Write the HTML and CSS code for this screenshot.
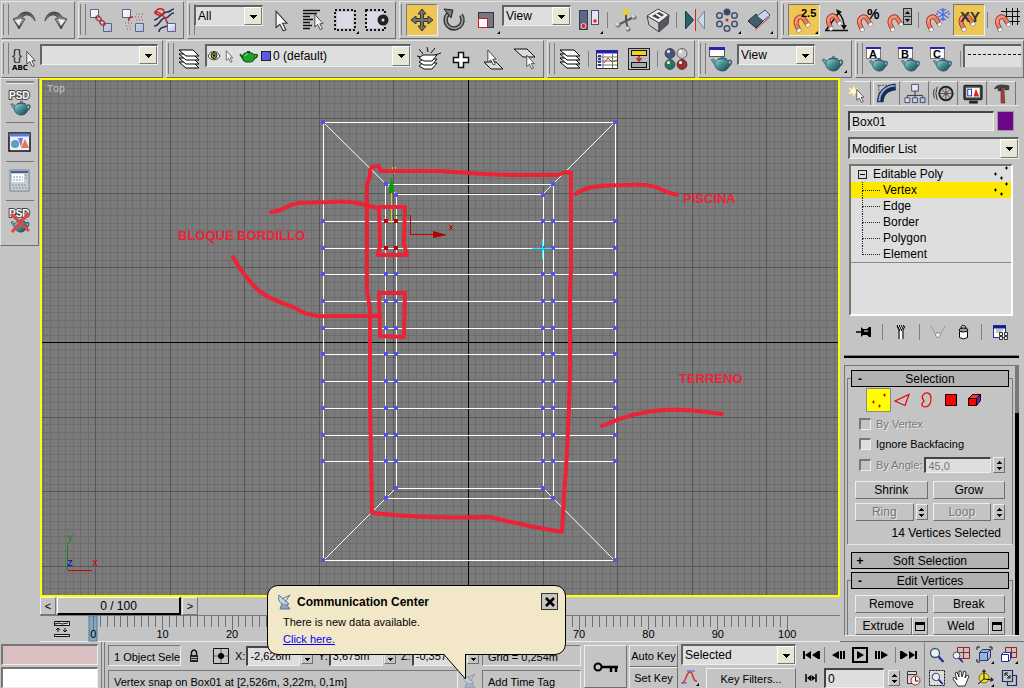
FILE: index.html
```html
<!DOCTYPE html>
<html lang="en">
<head>
<meta charset="utf-8">
<title>Box01 - Editable Poly</title>
<link rel="stylesheet" href="styles.css">
</head>
<body>
<svg class="defs" aria-hidden="true">
  <defs>
    <linearGradient id="g-steel" x1="0" y1="0" x2="0" y2="1"><stop offset="0" stop-color="#444"/><stop offset=".5" stop-color="#999"/><stop offset="1" stop-color="#333"/></linearGradient>
    <linearGradient id="g-pot" x1="0" y1="0" x2="1" y2="1"><stop offset="0" stop-color="#b4dcdc"/><stop offset=".4" stop-color="#4f979d"/><stop offset="1" stop-color="#173f48"/></linearGradient>
    <linearGradient id="g-box" x1="0" y1="0" x2="1" y2="1"><stop offset="0" stop-color="#fff"/><stop offset="1" stop-color="#b4bcd8"/></linearGradient>
    <radialGradient id="g-ball" cx=".35" cy=".3" r=".8"><stop offset="0" stop-color="#fff"/><stop offset="1" stop-color="#445"/></radialGradient>
    <symbol id="cursor" viewBox="0 0 12 20"><path d="M1 1v15l3.500-3 3 6 2.500-1-3-6H11z" fill="#f6f6f6" stroke="#333"/></symbol>
    <symbol id="teapot" viewBox="0 0 24 18"><path d="M18 7c3-3 5-1 4.500 1S20 12 17 13" fill="none" stroke="#2c6068" stroke-width="1.600"/><path d="M6 12L1 5l2-1 5 4z" fill="#62a5a9" stroke="#2a5960" stroke-width=".7"/><path d="M5 10c0-5 4-6 8-6s7 2 7 6c0 4-3 7-7 7s-8-3-8-7z" fill="url(#g-pot)" stroke="#224b53" stroke-width=".7"/><path d="M8 4.500c3-1.500 7-1.500 10 0" fill="none" stroke="#224b53"/><circle cx="13" cy="2.500" r="1.300" fill="#4f979d" stroke="#224b53" stroke-width=".6"/></symbol>
    <symbol id="magnet" viewBox="0 0 20 24"><g fill="none"><path d="M7 21L3.500 13C2 5 9 2 12.500 7L17 14" stroke="#84291c" stroke-width="5.500"/><path d="M7 21L3.500 13C2 5 9 2 12.500 7L17 14" stroke="#f07a5e" stroke-width="4"/><path d="M3 12C2 6 7 3 11 5" stroke="#ffc0ac"/><path d="M5.500 17.500L7.500 22M15.500 11.500L18 15.500" stroke="#888" stroke-width="5"/><path d="M6 18.500L7.300 21.500M16 12.500L17.600 15" stroke="#fff" stroke-width="4"/></g></symbol>
    <symbol id="layers" viewBox="0 0 24 20"><g fill="#fff" stroke="#000"><path d="M2 13h14l6 6H9z"/><path d="M2 9h14l6 6H9z"/><path d="M2 5h14l6 6H9z"/><path d="M2 1h14l6 6H9z"/></g></symbol>
    <symbol id="points" viewBox="0 0 16 16"><path d="M1 8h3M2.500 6.500v3M7 12h3M8.500 10.500v3M12 2h3M13.500 .5v3" stroke="currentColor"/></symbol>
    <symbol id="dish" viewBox="0 0 16 16"><path d="M2 1c-2 7 3 11 10 9z" fill="#c4d6ec" stroke="#577399"/><path d="M5 5l8-4M8 8l5-7" stroke="#577399"/><path d="M5 10l-2 5h10l-4-5" fill="#8da4c2" stroke="#577399"/></symbol>
    <symbol id="lens" viewBox="0 0 16 16"><circle cx="6" cy="6" r="4.500" fill="#e4f4f8" stroke="#44506e" stroke-width="1.300"/><path d="M9.500 9.500L14.500 15" stroke="#2830a0" stroke-width="2.400"/></symbol>
  </defs>
</svg>

<div class="app">
  <header class="toolbar" aria-label="Main toolbar">
    <div class="group">
      <button class="tool" aria-label="Undo"><svg viewBox="0 0 28 28"><path d="M25 15C24 5 12 3 8 11L3 13l6 10 6-10-3-1c3-5 9-4 13 3z" fill="url(#g-steel)" stroke="#333" stroke-width=".7"/><path d="M5 14l7-1-3 7z" fill="#eee"/></svg></button>
      <button class="tool" aria-label="Redo"><svg viewBox="0 0 28 28"><path d="M3 15C4 5 16 3 20 11l5 2-6 10-6-10 3-1c-3-5-9-4-13 3z" fill="url(#g-steel)" stroke="#333" stroke-width=".7"/><path d="M23 14l-7-1 3 7z" fill="#eee"/></svg></button>
    </div>
    <div class="group">
      <button class="tool" aria-label="Select and link"><svg viewBox="0 0 28 28"><g fill="url(#g-box)" stroke="#5b628c"><path d="M3.500 3.500h8v8h-8zM16.500 17.500h8v8h-8z"/></g><g fill="none" stroke="#a22a2a" stroke-width="1.300"><ellipse cx="11.500" cy="12.500" rx="3" ry="2" transform="rotate(45 11.500 12.500)"/><ellipse cx="15.500" cy="17" rx="3" ry="2" transform="rotate(45 15.500 17)"/></g></svg></button>
      <button class="tool" aria-label="Unlink selection"><svg viewBox="0 0 28 28"><g fill="url(#g-box)" stroke="#5b628c"><path d="M3.500 3.500h8v8h-8zM16.500 17.500h8v8h-8z"/></g><path d="M10 15c-1-3 1-4 4-4" fill="none" stroke="#a22a2a" stroke-width="1.500"/><path d="M17 8h7M16 11h9M17 14h7M6 17h8M7 20h6M8 23h4" stroke="#c04848" stroke-dasharray="1 2"/></svg></button>
      <button class="tool" aria-label="Bind to space warp"><svg viewBox="0 0 28 28"><path d="M3 14c4 0 9-8 13-8s4-3 7-3M3 20c6 0 6-8 11-8s4-5 9-5M8 26c0-8 12-2 8-10" fill="none" stroke="#283058" stroke-width="1.500"/><path d="M4 7c2-6 9-5 9-1s-7 4-9 1 8-1 12 9" fill="none" stroke="#c42222" stroke-width="1.500"/><path d="M16.500 17.500h8v8h-8z" fill="url(#g-box)" stroke="#5b628c"/></svg></button>
    </div>
    <div class="group">
      <span class="combo w-filter"><select aria-label="Selection filter"><option>All</option></select></span>
      <button class="tool" aria-label="Select object"><svg viewBox="0 0 28 28"><use href="#cursor" x="8" y="4" width="13" height="22"/></svg></button>
      <button class="tool" aria-label="Select by name"><svg viewBox="0 0 28 28"><path d="M4 4.500h17M4 7.500h14M4 10.500h7M4 13.500h10M4 16.500h7M4 19.500h9M4 22.500h7" stroke="#111" stroke-width="1.500"/><use href="#cursor" x="15" y="7" width="10" height="18"/></svg></button>
      <button class="tool" aria-label="Rectangular region"><svg viewBox="0 0 28 28"><rect x="6" y="6" width="16" height="16" fill="#dadae6"/><rect x="4" y="4" width="20" height="20" fill="none" stroke="#111" stroke-width="2" stroke-dasharray="2 2"/><path d="M28 25v3h-3z" /></svg></button>
      <button class="tool" aria-label="Window crossing"><svg viewBox="0 0 28 28"><rect x="4" y="6" width="16" height="16" fill="#dadae6"/><rect x="3" y="4" width="19" height="20" fill="none" stroke="#111" stroke-width="2" stroke-dasharray="2 2"/><circle cx="20" cy="14" r="5.500" fill="#222"/><circle cx="20" cy="14" r="1.500" fill="#ddd"/></svg></button>
    </div>
    <div class="group">
      <button class="tool on" aria-label="Select and move"><svg viewBox="0 0 28 28"><path d="M14 3l4 5h-2.500v4.500H20V10l5 4-5 4v-2.500h-4.500V20H18l-4 5-4-5h2.500v-4.500H8V18l-5-4 5-4v2.500h4.500V8H10z" fill="#77736a" stroke="#333"/></svg></button>
      <button class="tool" aria-label="Select and rotate"><svg viewBox="0 0 28 28"><path d="M8 8a8.500 8.500 0 1 0 13 1" fill="none" stroke="#333" stroke-width="4.500"/><path d="M8 8a8.500 8.500 0 1 0 13 1" fill="none" stroke="#999" stroke-width="1.800"/><path d="M4 3l9 1-2 8z" fill="#777" stroke="#222"/></svg></button>
      <button class="tool" aria-label="Select and scale"><svg viewBox="0 0 28 28"><rect x="6.500" y="6.500" width="15" height="15" fill="#777684" stroke="#333"/><rect x="6.500" y="12.500" width="9" height="9" fill="#fff" stroke="#d01818"/><path d="M28 25v3h-3z"/></svg></button>
      <span class="combo w-filter"><select aria-label="Reference coordinate system"><option>View</option></select></span>
      <button class="tool" aria-label="Use pivot point center"><svg viewBox="0 0 28 28"><rect x="4.500" y="4.500" width="8" height="19" fill="#5e6884" stroke="#333b56"/><rect x="16.500" y="4.500" width="7" height="14" fill="#dfe6f8" stroke="#465178"/><circle cx="8.500" cy="20" r="2.500" fill="#e22" stroke="#fff" stroke-width=".7"/><circle cx="20" cy="15" r="2.200" fill="#e22" stroke="#fff" stroke-width=".7"/><path d="M28 25v3h-3z"/></svg></button>
      <span class="sep"></span>
      <button class="tool" aria-label="Select and manipulate"><svg viewBox="0 0 28 28"><path d="M14 6v9L6 19M14 15l8-4M14 15l2 8" stroke="#555" stroke-width="2" fill="none"/><circle cx="14" cy="6" r="3" fill="#f0d028"/><g fill="url(#g-ball)"><circle cx="6" cy="19" r="2.500"/><circle cx="22" cy="11" r="2.500"/><circle cx="16" cy="23" r="2.500"/></g></svg></button>
      <button class="tool" aria-label="Keyboard shortcut override"><svg viewBox="0 0 28 28"><path d="M3 10L14 3l11 6-10 8z" fill="#eee" stroke="#444"/><path d="M3 10l12 7v9L5 19z" fill="#c8c8cc" stroke="#444"/><path d="M15 17l10-8-1 9-9 8z" fill="#555860" stroke="#444"/><path d="M8 10l7-4 5 3-6 4z" fill="#444"/><path d="M12 8l5 3" stroke="#fff" stroke-width="2"/></svg></button>
      <span class="sep"></span>
      <button class="tool" aria-label="Mirror"><svg viewBox="0 0 28 28"><path d="M4.500 5v18l8-9z" fill="#2b6268" stroke="#173a40"/><path d="M23.500 5v18l-7-9z" fill="#ccd8e4" stroke="#72839c"/><path d="M14.500 3v22" stroke="#d22"/></svg></button>
      <button class="tool" aria-label="Array"><svg viewBox="0 0 28 28"><g fill="#b8c2d6" stroke="#44506a" stroke-width="1.500"><circle cx="14" cy="6" r="2.800" fill="#224a60"/><circle cx="21.500" cy="9.500" r="2.800"/><circle cx="21.500" cy="18" r="2.800"/><circle cx="14" cy="22.500" r="2.800"/><circle cx="6.500" cy="18" r="2.800"/><circle cx="6.500" cy="9.500" r="2.800"/></g><circle cx="14" cy="14" r="1.500" fill="#d22"/><path d="M28 25v3h-3z"/></svg></button>
      <button class="tool" aria-label="Align"><svg viewBox="0 0 28 28"><path d="M3 15l8-7 7 7-7 7z" fill="#40606c" stroke="#223"/><path d="M12 10l8-6 5 5-7 6z" fill="#ccd5e8" stroke="#44506a"/><path d="M10 24L25 11" stroke="#d33"/><path d="M28 25v3h-3z"/></svg></button>
    </div>
    <div class="group grow">
      <button class="tool on" aria-label="Snap 2.5"><svg viewBox="0 0 28 28"><use href="#magnet" x="3" y="7" width="18" height="21"/><text x="11" y="11" class="ico-b">2.5</text><path d="M28 25v3h-3z"/></svg></button>
      <button class="tool" aria-label="Angle snap"><svg viewBox="0 0 28 28"><path d="M3 24.500h23M4 24L18 5M15 5c4 4 8 10 7 18" fill="none" stroke="#111" stroke-width="1.500"/><path d="M14 3l6 3-4 3zM19 19h6l-3 5z" fill="#111"/><use href="#magnet" x="3" y="6" width="18" height="20"/></svg></button>
      <button class="tool" aria-label="Percent snap"><svg viewBox="0 0 28 28"><use href="#magnet" x="2" y="7" width="18" height="20"/><text x="13" y="13" class="ico-pct">%</text></svg></button>
      <button class="tool" aria-label="Spinner snap"><svg viewBox="0 0 28 28"><use href="#magnet" x="1" y="7" width="17" height="20"/><rect x="17.500" y="2.500" width="8" height="8" fill="#aaa" stroke="#333"/><rect x="17.500" y="10.500" width="8" height="8" fill="#aaa" stroke="#333"/><path d="M19 8l2.500-3L24 8zM19 13h5l-2.500 3z"/></svg></button>
      <span class="sep"></span>
      <button class="tool" aria-label="Snap to frozen"><svg viewBox="0 0 28 28"><use href="#magnet" x="2" y="7" width="18" height="20"/><path d="M20 2v13M14 5l12 7M26 5l-12 7M17 3l3 2 3-2M17 14l3-2 3 2M15 8h-2M25 8h2" stroke="#5068e0" stroke-width="1.300" fill="none"/></svg></button>
      <button class="tool on" aria-label="Snap axis constraints"><svg viewBox="0 0 28 28"><use href="#magnet" x="2" y="6" width="20" height="21"/><text x="5" y="16" class="ico-xy">XY</text></svg></button>
      <span class="sep"></span>
      <button class="tool" aria-label="Grid snap"><svg viewBox="0 0 28 28"><path d="M14.500 2v17M20.500 2v17M25.500 2v17M9 5.500h19M9 10.500h19M12 15.500h16" stroke="#111"/><use href="#magnet" x="2" y="7" width="18" height="20"/></svg></button>
    </div>
  </header>

  <header class="toolbar" aria-label="Secondary toolbar">
    <div class="group">
      <button class="tool" aria-label="Named selection sets"><svg viewBox="0 0 28 28"><text x="2" y="15" class="ico-brace">{}</text><text x="2" y="25" class="ico-s">ABC</text><use href="#cursor" x="16" y="5" width="10" height="18"/></svg></button>
      <span class="combo w-sets"><select aria-label="Named sets"><option></option></select></span>
    </div>
    <div class="group">
      <button class="tool" aria-label="Layer manager"><svg viewBox="0 0 28 28"><use href="#layers" x="2" y="4" width="24" height="20"/></svg></button>
      <span class="combo w-layer">
        <svg class="state" viewBox="0 0 52 16"><path d="M1 8c3-6 9-6 12 0-3 5-9 5-12 0z" fill="#fff" stroke="#333"/><circle cx="7" cy="7.500" r="3" fill="#8c8a22" stroke="#222"/><circle cx="7" cy="7.500" r="1"/><use href="#cursor" x="18" y="2" width="9" height="13"/><path d="M47 7c5-2 4 3-1 4M36 11l-3-5" fill="none" stroke="#0b4d12" stroke-width="1.500"/><path d="M35 9c0-6 13-6 13 0q-1 5-5 5h-4q-3 0-4-5z" fill="#1da32a" stroke="#0b4d12"/><path d="M40 3h3v2h-3z" fill="#0b4d12"/><path d="M38 8q1-2 3-2" fill="none" stroke="#9fea9f"/></svg>
        <i class="layer-color"></i>
        <select aria-label="Layer"><option>0 (default)</option></select>
      </span>
      <button class="tool" aria-label="Create new layer"><svg viewBox="0 0 28 28"><path d="M12 2l1 5M4 4l4 5M20 3l-4 5M26 8l-6 2M2 11l4 1" stroke="#111"/><g fill="#fff" stroke="#111"><path d="M4 21l4-3h14l-5 6H9z"/><path d="M4 17l4-3h14l-5 6H9z"/><path d="M4 13l4-3h14l-5 6H9z"/></g></svg></button>
      <button class="tool" aria-label="Add selection to layer"><svg viewBox="0 0 28 28"><path d="M11.500 7.500h5v5h5v5h-5v5h-5v-5h-5v-5h5z" fill="#fff" stroke="#111" stroke-width="1.500"/></svg></button>
      <button class="tool" aria-label="Select objects in layer"><svg viewBox="0 0 28 28"><path d="M5 17h12l7 7H12z" fill="#ddd" stroke="#111"/><use href="#cursor" x="8" y="4" width="10" height="17"/></svg></button>
      <button class="tool" aria-label="Set current layer"><svg viewBox="0 0 28 28"><path d="M3 4h13l8 8H12z" fill="#ddd" stroke="#111"/><use href="#cursor" x="15" y="9" width="9" height="16"/></svg></button>
    </div>
    <div class="group">
      <button class="tool" aria-label="Layers"><svg viewBox="0 0 28 28"><use href="#layers" x="2" y="4" width="24" height="20"/></svg></button>
      <span class="sep"></span>
      <button class="tool" aria-label="Curve editor"><svg viewBox="0 0 28 28"><rect x="3.500" y="5.500" width="21" height="18" fill="#fff" stroke="#333"/><path d="M3 7h22" stroke="#2222b8" stroke-width="3"/><path d="M4 12h20M4 16h20M4 20h20M10 9v14" stroke="#777"/><path d="M11 18l4-5 4 4 5-2" stroke="#d22" fill="none"/><path d="M19.500 9v14" stroke="#2a2"/><path d="M6.500 10v12" stroke="#33a" stroke-width="3" stroke-dasharray="2 1"/></svg></button>
      <button class="tool" aria-label="Schematic view"><svg viewBox="0 0 28 28"><rect x="3.500" y="3.500" width="21" height="21" fill="#bbb" stroke="#222"/><rect x="6.500" y="5.500" width="15" height="5" fill="#f2d21a" stroke="#111"/><path d="M14 11v5M11.500 13l2.500 3 2.500-3" stroke="#c22" stroke-width="1.500" fill="none"/><rect x="6.500" y="17.500" width="15" height="5" fill="#aaa" stroke="#111"/></svg></button>
      <span class="sep"></span>
      <button class="tool" aria-label="Material editor"><svg viewBox="0 0 28 28"><g stroke="#222" stroke-width=".6"><circle cx="8" cy="8.500" r="5" fill="#46537c"/><circle cx="20" cy="8.500" r="5" fill="#c8c8c8"/><circle cx="8" cy="19.500" r="5" fill="#287464"/><circle cx="20" cy="19.500" r="5" fill="#9c2c34"/></g><g fill="#fff"><circle cx="6.500" cy="6.500" r="1.500"/><circle cx="18.500" cy="6.500" r="1.500"/><circle cx="6.500" cy="17.500" r="1.500"/><circle cx="18.500" cy="17.500" r="1.500"/></g></svg></button>
    </div>
    <div class="group">
      <button class="tool" aria-label="Render scene"><svg viewBox="0 0 28 28"><rect x="2.500" y="2.500" width="15" height="9" fill="#fff" stroke="#555"/><path d="M2 3.500h16" stroke="#2a22b0" stroke-width="3"/><use href="#teapot" x="2" y="10" width="25" height="17"/></svg></button>
      <span class="combo w-view"><select aria-label="Render type"><option>View</option></select></span>
      <button class="tool" aria-label="Quick render"><svg viewBox="0 0 28 28"><use href="#teapot" x="1" y="10" width="25" height="17"/><path d="M28 25v3h-3z"/></svg></button>
    </div>
    <div class="group grow">
      <button class="tool" aria-label="Render A"><svg viewBox="0 0 28 28"><rect x="2.500" y="2.500" width="14" height="11" fill="#fff" stroke="#777"/><path d="M2 3h15" stroke="#2a22b0" stroke-width="2"/><text x="5" y="13" class="ico-b">A</text><use href="#teapot" x="3" y="12" width="23" height="15"/></svg></button>
      <button class="tool" aria-label="Render B"><svg viewBox="0 0 28 28"><rect x="2.500" y="2.500" width="14" height="11" fill="#fff" stroke="#777"/><path d="M2 3h15" stroke="#2a22b0" stroke-width="2"/><text x="5" y="13" class="ico-b">B</text><use href="#teapot" x="3" y="12" width="23" height="15"/></svg></button>
      <button class="tool" aria-label="Render C"><svg viewBox="0 0 28 28"><rect x="2.500" y="2.500" width="14" height="11" fill="#fff" stroke="#777"/><path d="M2 3h15" stroke="#2a22b0" stroke-width="2"/><text x="5" y="13" class="ico-b">C</text><use href="#teapot" x="3" y="12" width="23" height="15"/></svg></button>
      <span class="sep"></span>
      <div class="line-style"><hr></div>
    </div>
  </header>

  <div class="body">
    <div class="work">
      <div class="stage">
        <nav class="side" aria-label="PSD tools">
          <button class="side-tool" aria-label="PSD render"><svg viewBox="0 0 24 26"><text x="1" y="9" class="ico-psd">PSD</text><use href="#teapot" x="1" y="10" width="23" height="16"/></svg></button>
          <button class="side-tool" aria-label="Preview window"><svg viewBox="0 0 24 26"><rect x="1" y="4" width="21" height="18" fill="#eef" stroke="#111" stroke-width="1.500"/><path d="M1 6h21" stroke="#5d7bd8" stroke-width="3"/><circle cx="7" cy="15" r="4" fill="#5aa0b8"/><path d="M10 9h5l-2 9z" fill="#7f78c8"/><path d="M17 10l4 9h-8z" fill="#dd7a50"/></svg></button>
          <button class="side-tool" aria-label="Calculator"><svg viewBox="0 0 24 26"><rect x="2" y="2" width="19" height="21" fill="#c3d0d6" stroke="#75858c"/><rect x="4" y="6" width="12" height="8" fill="#fff"/><path d="M3 4h17" stroke="#4b5d98" stroke-width="2"/><path d="M5 9h10M5 12h10M17 7h3M17 10h3M4 17h15M5 20h14" stroke="#8592a0" stroke-dasharray="2 1"/></svg></button>
          <button class="side-tool" aria-label="Remove PSD"><svg viewBox="0 0 24 26"><text x="1" y="9" class="ico-psd">PSD</text><use href="#teapot" x="1" y="10" width="22" height="15"/><path d="M3 6l18 17M21 5L4 24" stroke="#e04444" stroke-width="3"/></svg></button>
        </nav>
        <main class="viewport">
          <svg class="scene" viewBox="42 80 796 515" preserveAspectRatio="xMidYMid slice" role="img" aria-label="Top viewport">
            <g shape-rendering="crispEdges">
              <path id="grid-minor" class="minor"/><path id="grid-major" class="major"/>
              <path class="axis" d="M468.500 80V595M42 342.500H838"/>
              <path id="mesh" class="mesh"/>
            </g>
            <path class="mesh" d="M323 122L396 194M615 122L543 194M323 561L396 488M615 561L543 488"/>
            <g id="verts" shape-rendering="crispEdges"></g>
            <g fill="none" shape-rendering="crispEdges">
              <path d="M391.500 184V223" stroke="#e6cc10"/><path d="M392 215.500h18" stroke="#0a8c0a"/><path d="M410.500 215v19.500H438" stroke="#c00"/>
              <path d="M532 248.500h20M542.500 239v20" stroke="#0ff"/>
              <path d="M392.500 167v4M395.500 167v4M394 171v3" stroke="#e6cc10"/><path d="M449 225l4 5M453 225l-4 5" stroke="#c00"/>
            </g>
            <path d="M391.500 177l2.500 10v6h-5v-6z" fill="#0a9c0a"/><path d="M433 231l14 4-14 3z" fill="#b00000"/>
            <g class="pen">
              <path d="M370 176V170L372 167L379 166L381 171L440 171Q490 175 515 175L558 175L566 172L571 173L571 270L570 290L570 370Q568 450 564 495L562 532Q525 526 490 517Q430 519 372 513L370 400V310L367 290V184L370 176"/>
              <path d="M271 212C282 212 290 203 300 203L330 202C357 200 365 206 379 208"/>
              <path d="M379 207L405 207L404 244L407 255L378 255L380 245z"/>
              <path d="M379 293L405 293L404 337L380 336z"/>
              <path d="M233 257C243 275 255 288 262 293C275 302 290 305 297 309C305 315 320 317 330 316L380 316"/>
              <path d="M576 194C585 186 605 185 625 185C645 184 652 185 660 189Q668 193 677 195"/>
              <path d="M602 426C620 418 640 411 665 410C690 409 705 412 722 414"/>
            </g>
            <g class="note"><text x="178" y="240">BLOQUE BORDILLO</text><text x="683" y="203">PISCINA</text><text x="679" y="383">TERRENO</text></g>
            <text x="47" y="92" class="view-name">Top</text>
            <g class="tripod"><path d="M67.500 545V570" stroke="#0a8c0a"/><path d="M68 570.500h24" stroke="#c00"/><text x="67" y="541" fill="#0a8c0a">y</text><text x="67" y="566" fill="#00c">z</text><text x="92" y="566" fill="#c00">x</text></g>
          </svg>
        </main>
      </div>
      <div class="time-slider">
        <button class="step" aria-label="Previous frame">&lt;</button><button class="thumb">0 / 100</button><button class="step" aria-label="Next frame">&gt;</button>
      </div>
      <div class="trackbar">
        <button class="curve" aria-label="Open mini curve editor"><svg viewBox="0 0 18 18"><path d="M1.500 1.500h15v4h-15zM1.500 14.500h15v2h-15z" fill="#ddd" stroke="#111"/><path d="M2 4l4-1 3 1 6-1M5 12V8M3 10l2-2 2 2M12 8v4M10 10l2 2 2-2" fill="none" stroke="#111"/></svg></button>
        <svg id="ticks" class="ticks" role="img" aria-label="Track bar"></svg>
      </div>
    </div>

    <aside class="panel">
      <div class="tabs" role="tablist">
        <button class="tab" aria-label="Create"><svg viewBox="0 0 24 24"><path d="M9 2l1 5 5-2-4 4 4 3-5 0-1 5-2-5-5 1 3-4-3-4 5 2z" fill="#fff8c8" stroke="#cdb96a" stroke-width=".5"/><use href="#cursor" x="11" y="7" width="9" height="15"/></svg></button>
        <button class="tab active" aria-label="Modify"><svg viewBox="0 0 24 24"><path d="M3.500 21V3.500H21M2 3.500h3M20 2v3" fill="none" stroke="#555" stroke-dasharray="2 1"/><path d="M5 21C5 12 11 6 21 5" fill="none" stroke="#1b2854" stroke-width="7"/><path d="M4 20C4 11 11 4 20 4" fill="none" stroke="#8cacdf" stroke-width="2"/></svg></button>
        <button class="tab" aria-label="Hierarchy"><svg viewBox="0 0 24 24"><path d="M12 9v6M4 17v-3h16v3M12 15v2" fill="none" stroke="#333"/><g fill="url(#g-box)" stroke="#414b70"><path d="M8.500 2.500h7v7h-7zM1.500 16.500h5v5h-5zM9.500 16.500h5v5h-5zM17.500 16.500h5v5h-5z"/></g></svg></button>
        <button class="tab" aria-label="Motion"><svg viewBox="0 0 24 24"><circle cx="14" cy="12" r="7" fill="#bbb" stroke="#222" stroke-width="2"/><circle cx="14" cy="12" r="2" fill="#c44"/><path d="M14 6v12M8 12h12M10 8l8 8M18 8l-8 8" stroke="#555"/><path d="M5 5q-3 7 0 14M2 7q-2 5 0 10" fill="none" stroke="#333"/></svg></button>
        <button class="tab" aria-label="Display"><svg viewBox="0 0 24 24"><rect x="2.500" y="3.500" width="19" height="15" rx="1" fill="#444" stroke="#111"/><rect x="5" y="6" width="14" height="10" fill="#fff"/><rect x="6.500" y="7.500" width="4" height="7" fill="#fff" stroke="#1c2cc0"/><path d="M15 7l3.500 8h-6z" fill="#d22"/><path d="M8 21h9" stroke="#222" stroke-width="3"/></svg></button>
        <button class="tab" aria-label="Utilities"><svg viewBox="0 0 24 24"><path d="M4 7c3-5 8-4 15-3v4h-4V6H11v3H8V6z" fill="#444" stroke="#111" stroke-width=".6"/><path d="M11 7h3l1 15h-4z" fill="#b53a30" stroke="#333" stroke-width=".6"/></svg></button>
      </div>
      <div class="name-row">
        <input class="field" aria-label="Object name" value="Box01"><button class="swatch" aria-label="Object color"></button>
      </div>
      <span class="combo w-full"><select aria-label="Modifier List"><option>Modifier List</option></select></span>
      <div class="stack">
        <div class="stack-row root"><i class="expander"></i><span>Editable Poly</span><svg class="pts"><use href="#points"/></svg></div>
        <ul>
          <li class="stack-row picked"><span>Vertex</span><svg class="pts"><use href="#points"/></svg></li>
          <li class="stack-row"><span>Edge</span></li>
          <li class="stack-row"><span>Border</span></li>
          <li class="stack-row"><span>Polygon</span></li>
          <li class="stack-row"><span>Element</span></li>
        </ul>
      </div>
      <div class="stack-tools">
        <button class="mini" aria-label="Pin stack"><svg viewBox="0 0 18 18"><path d="M1 9h6" stroke="#000" stroke-width="1.500"/><path d="M6 4v10l2-2h4l2 2h2V4h-2l-2 2H8z"/><path d="M9 8h4" stroke="#fff"/></svg></button>
        <span class="sep"></span>
        <button class="mini" aria-label="Show end result"><svg viewBox="0 0 18 18"><path d="M5 3h8M6 5h6M7 7h4" stroke="#222" stroke-dasharray="1 1" stroke-width="2"/><path d="M5 3l2 4v9M13 3l-2 4v9" stroke="#000" fill="none"/><path d="M8 8h2v8H8z" fill="#fff"/></svg></button>
        <span class="sep"></span>
        <button class="mini" aria-label="Make unique"><svg viewBox="0 0 18 18"><path d="M2 3l5 9M16 3l-5 9M9 12v3" stroke="#888" stroke-dasharray="2 1" fill="none"/><circle cx="9" cy="12" r="2.500" fill="#eee" stroke="#888"/></svg></button>
        <button class="mini" aria-label="Remove modifier"><svg viewBox="0 0 18 18"><path d="M5.500 8.500h8v6q-4 3-8 0z" fill="#fff" stroke="#000"/><ellipse cx="9.500" cy="7" rx="4.500" ry="2" fill="#999" stroke="#000"/><path d="M7 5c0-4 5-3 5 0" fill="none" stroke="#000"/></svg></button>
        <span class="sep"></span>
        <button class="mini" aria-label="Configure sets"><svg viewBox="0 0 18 18"><rect x="2.500" y="2.500" width="12" height="12" fill="#fff" stroke="#223a98"/><path d="M2 4h13" stroke="#0a1e9c" stroke-width="3"/><path d="M5 7h7M5 9h5" stroke="#888"/><path d="M8.500 9.500h3v3h-3zM13.500 9.500h3v3h-3zM8.500 13.500h3v3h-3zM13.500 13.500h3v3h-3z" fill="#eee" stroke="#333"/></svg></button>
      </div>
      <hr class="rule">
      <div class="rollouts">
        <div class="roll-list">
          <section class="rollout">
            <button class="roll-head"><b>-</b><span>Selection</span></button>
            <div class="roll-body">
              <div class="levels">
                <button class="level on" aria-label="Vertex"><svg viewBox="0 0 22 22"><path d="M5 13h3M6.500 11.500v3M11 17h3M12.500 15.500v3M16 6h3M17.500 4.500v3" stroke="#e00"/></svg></button>
                <button class="level" aria-label="Edge"><svg viewBox="0 0 22 22"><path d="M4 12L18 5.500 14 16.500z" fill="none" stroke="#e00" stroke-width="1.200"/></svg></button>
                <button class="level" aria-label="Border"><svg viewBox="0 0 22 22"><path d="M8 6c3-4 8-2 8 3s-2 9-6 9c-5-1-3-4-1-6-1-2-3-3-1-6z" fill="none" stroke="#e00" stroke-width="1.200"/></svg></button>
                <button class="level" aria-label="Polygon"><svg viewBox="0 0 22 22"><path d="M6.500 5.500h11v11h-11z" fill="#f00" stroke="#000"/></svg></button>
                <button class="level" aria-label="Element"><svg viewBox="0 0 22 22"><path d="M5.500 9.500h8v7h-8z" fill="#f00" stroke="#000"/><path d="M5.500 9.500l4-4h8l-4 4z" fill="#f33" stroke="#000"/><path d="M13.500 9.500l4-4v6l-4 5z" fill="#7020a0" stroke="#000"/></svg></button>
              </div>
              <label class="check off"><input type="checkbox" disabled>By Vertex</label>
              <label class="check"><input type="checkbox">Ignore Backfacing</label>
              <div class="angle"><label class="check off"><input type="checkbox" disabled>By Angle:</label><input class="field" aria-label="Angle" value="45,0" disabled><span class="spin"></span></div>
              <div class="pair"><button class="btn">Shrink</button><button class="btn">Grow</button></div>
              <div class="pair"><span class="with-spin"><button class="btn" disabled>Ring</button><span class="spin"></span></span><span class="with-spin"><button class="btn" disabled>Loop</button><span class="spin"></span></span></div>
              <p class="count">14 Vertices Selected</p>
            </div>
          </section>
          <section class="rollout closed"><button class="roll-head"><b>+</b><span>Soft Selection</span></button></section>
          <section class="rollout">
            <button class="roll-head"><b>-</b><span>Edit Vertices</span></button>
            <div class="roll-body edit-body">
              <div class="pair"><button class="btn">Remove</button><button class="btn">Break</button></div>
              <div class="pair"><span class="with-box"><button class="btn">Extrude</button><button class="btn box" aria-label="Extrude settings"><i></i></button></span><span class="with-box"><button class="btn">Weld</button><button class="btn box" aria-label="Weld settings"><i></i></button></span></div>
            </div>
          </section>
        </div>
        <div class="roll-scroll"><i></i></div>
      </div>
    </aside>
  </div>

  <footer class="status">
    <div class="listener"><div class="macro"></div><div class="output"></div></div>
    <div class="info">
      <div class="info-row">
        <span class="cell sel-info">1 Object Sele</span>
        <button class="mini" aria-label="Lock selection"><svg viewBox="0 0 18 18"><path d="M6.500 8V5q2.500-4 5 0v3" fill="none" stroke="#111" stroke-width="1.500"/><path d="M5 8h8v7H5z" fill="#222"/><path d="M6 10.500h6M6 12.500h6" stroke="#bbb"/></svg></button>
        <button class="mini" aria-label="Absolute mode"><svg viewBox="0 0 18 18"><path d="M1.500 1.500h15v15h-15z" fill="none" stroke="#111"/><path d="M2 9h14M9 2v14" stroke="#666"/><circle cx="9" cy="9" r="3"/></svg></button>
        <label class="coord">X:<input class="field" value="-2,626m"><span class="spin"></span></label>
        <label class="coord">Y:<input class="field" value="3,675m"><span class="spin"></span></label>
        <label class="coord">Z:<input class="field" value="-0,357m"><span class="spin"></span></label>
        <span class="cell grid-info">Grid = 0,254m</span>
      </div>
      <div class="info-row">
        <span class="cell prompt">Vertex snap on Box01 at [2,526m, 3,22m, 0,1m]</span>
        <button class="mini faded" aria-label="Communication center"><svg viewBox="0 0 18 18"><use href="#dish" x="1" y="1" width="16" height="16"/></svg></button>
        <span class="cell grid-info">Add Time Tag</span>
      </div>
    </div>
    <button class="btn key" aria-label="Set keys"><svg viewBox="0 0 26 14"><circle cx="5" cy="7" r="3.500" fill="none" stroke="#000" stroke-width="2"/><path d="M9 7h16M18 8v4M23 8v4" stroke="#000" stroke-width="2.500" fill="none"/></svg></button>
    <div class="keys">
      <button class="btn">Auto Key</button><button class="btn">Set Key</button>
    </div>
    <div class="filters">
      <span class="combo"><select aria-label="Key selection"><option>Selected</option></select></span>
      <div class="filter-row"><button class="mini" aria-label="Default tangents"><svg viewBox="0 0 18 18"><path d="M1 15c4 0 4-11 8-11s2 10 7 9" fill="none" stroke="#c33" stroke-width="1.500"/><path d="M6 3h8M0 15h6" stroke="#55c"/><path d="M18 15v3h-3z"/></svg></button><button class="btn">Key Filters...</button></div>
    </div>
    <div class="play">
      <div class="play-row">
        <button class="mini" aria-label="Go to start"><svg viewBox="0 0 18 18"><path d="M2 5v8M17 5v8" stroke="#000" stroke-width="2"/><path d="M9 5v8L3 9zM16 5v8L10 9z"/></svg></button><span class="sep"></span>
        <button class="mini" aria-label="Previous"><svg viewBox="0 0 18 18"><path d="M10 5v8L3 9z"/><path d="M12 5v8M15 5v8" stroke="#000" stroke-width="2"/></svg></button>
        <button class="mini" aria-label="Play"><svg viewBox="0 0 18 18"><path d="M2 2h14v14H2z" fill="none" stroke="#000" stroke-width="2"/><path d="M6 5v8l7-4z"/></svg></button>
        <button class="mini" aria-label="Next"><svg viewBox="0 0 18 18"><path d="M8 5v8l7-4z"/><path d="M3 5v8M6 5v8" stroke="#000" stroke-width="2"/></svg></button><span class="sep"></span>
        <button class="mini" aria-label="Go to end"><svg viewBox="0 0 18 18"><path d="M16 5v8M1 5v8" stroke="#000" stroke-width="2"/><path d="M9 5v8l6-4zM2 5v8l6-4z"/></svg></button>
      </div>
      <div class="play-row">
        <button class="mini" aria-label="Key mode"><svg viewBox="0 0 18 18"><path d="M4 5v8M14 5v8" stroke="#000" stroke-width="1.500"/><path d="M9 6v6L5 9zM9.500 6v6l4-3z"/></svg></button>
        <input class="field frame" aria-label="Current frame" value="0"><span class="spin"></span>
        <button class="mini" aria-label="Time configuration"><svg viewBox="0 0 18 18"><path d="M3.500 2.500h9v3h-9zM3.500 5.500v9h5" fill="#ddd" stroke="#333"/><circle cx="11.500" cy="11.500" r="4.500" fill="#eee" stroke="#b22"/><path d="M11.500 8v4h3" stroke="#222" fill="none"/></svg></button>
      </div>
    </div>
    <div class="navs">
      <button class="mini" aria-label="Zoom"><svg viewBox="0 0 18 18"><use href="#lens" x="1" y="1" width="16" height="16"/></svg></button>
      <button class="mini" aria-label="Zoom all"><svg viewBox="0 0 18 18"><path d="M5.500 1.500h12v11h-12zM11.500 2v11M6 6.500h11" fill="none" stroke="#9c2020"/><use href="#lens" x="0" y="5" width="12" height="12"/></svg></button>
      <button class="mini" aria-label="Zoom extents"><svg viewBox="0 0 18 18"><path d="M1 4V1h3M13 1h3v3M1 13v3h3" fill="none" stroke="#111"/><path d="M3.500 6.500h8v8h-8zM3.500 6.500l3-3h8l-3 3M14.500 3.500v8l-3 3" fill="#9cb0dc" stroke="#223a78"/><path d="M18 15v3h-3z"/></svg></button>
      <button class="mini" aria-label="Zoom extents all"><svg viewBox="0 0 18 18"><path d="M5.500 1.500h11v10h-11zM11.500 2v10M6 6.500h11" fill="none" stroke="#9c2020"/><path d="M1.500 8.500h7v7h-7zM1.500 8.500l2-2h7v7l-2 2" fill="#fff" stroke="#1c2c98"/><path d="M18 15v3h-3z"/></svg></button>
      <button class="mini" aria-label="Region zoom"><svg viewBox="0 0 18 18"><path d="M1.500 1.500h15v15h-15z" fill="#ddd" stroke="#111" stroke-dasharray="2 1"/><use href="#lens" x="3" y="3" width="13" height="13"/></svg></button>
      <button class="mini" aria-label="Pan"><svg viewBox="0 0 18 18"><path d="M6 17L1 10l1-2 3 3L3 4l2-1 2 5V2h2l1 6 2-6 2 1-1 6 2-3 2 1-4 10z" fill="#fff" stroke="#222" stroke-width=".9"/></svg></button>
      <button class="mini" aria-label="Arc rotate"><svg viewBox="0 0 18 18"><circle cx="8" cy="9" r="5" fill="#f2e22c" stroke="#776a00"/><path d="M8 1v9L2 15M8 10l9 1" fill="none" stroke="#111"/><path d="M15 8l3 3-4 2M8 0l-2 3h4z" fill="#223"/><path d="M18 15v3h-3z"/></svg></button>
      <button class="mini" aria-label="Min max toggle"><svg viewBox="0 0 18 18"><path d="M2.500 1.500h10v11h-10zM12.500 6.500h4v10h-9v-4" fill="none" stroke="#1c2c78" stroke-width="1.200"/><path d="M5 4l5 5M5 7V4h3M10 6v3H7" fill="none" stroke="#111"/></svg></button>
    </div>
  </footer>

  <section class="balloon" aria-label="Communication Center">
    <header><svg class="dish" viewBox="0 0 16 16"><use href="#dish"/></svg><h2>Communication Center</h2><button class="btn close" aria-label="Close"><svg viewBox="0 0 10 10"><path d="M1 1l8 8M9 1L1 9" stroke="#000" stroke-width="2.500"/></svg></button></header>
    <p>There is new data available.</p>
    <a href="#">Click here.</a>
    <svg class="tail" viewBox="0 0 22 26"><path d="M0 0L21 25V0z" class="tail-fill"/><path d="M0 .5L21.500 25V1" fill="none" stroke="#000"/></svg>
  </section>
</div>
<script src="app.js"></script>
</body>
</html>
```

FILE: styles.css
```css
* { box-sizing: border-box; }
body { margin: 0; font: 11px/14px "Liberation Sans", Arial, sans-serif; color: #000; background: #c4c4c4; }
button, input, select { font: inherit; color: inherit; margin: 0; border-radius: 0; }
button { padding: 0; border: 0; background: none; }
p, h2, ul { margin: 0; padding: 0; }
svg { display: block; }
.defs { position: absolute; width: 0; height: 0; }
.app { position: relative; display: flex; flex-direction: column; height: 100vh; overflow: hidden; }

/* toolbars */
.toolbar { display: flex; gap: 3px; flex: none; height: 39px; padding: 1px 0 0 1px; overflow: hidden; }
.group { position: relative; display: flex; align-items: center; flex: none; height: 38px; padding: 0 2px 0 6px; border: 1px solid #6e6e6e; border-top-color: #e4e4e4; border-left-color: #e4e4e4; }
.group::before { content: ""; position: absolute; left: 1px; top: 2px; bottom: 3px; width: 4px; border: solid #7c7c7c; border-width: 0 1px; }
.group.grow { flex: 1 0 auto; }
.tool { flex: none; width: 32px; height: 32px; display: grid; place-items: center; }
.tool svg { width: 28px; height: 28px; }
.tool.on { background: #edc653; border: 1px solid #777; border-right-color: #eee; border-bottom-color: #eee; }
.sep { flex: none; width: 1px; height: 16px; margin: 0 2px; background: #808080; }
.ico-b { font: bold 11px "Liberation Sans", sans-serif; }
.ico-pct { font: bold 14px "Liberation Sans", sans-serif; }
.ico-s { font: bold 7px "DejaVu Sans", sans-serif; }
.ico-xy { font: bold 15px "Liberation Sans", sans-serif; fill: #333; }
.ico-brace { font: 15px "Liberation Sans", sans-serif; fill: #333; }
.ico-psd { font: bold 10px "Liberation Sans", sans-serif; fill: #fff; stroke: #444; stroke-width: 2px; paint-order: stroke; }

/* fields */
.combo { position: relative; display: flex; align-items: center; flex: none; height: 21px; background: #dedede; border: 1px solid #eee; border-top: 2px solid #5c6464; border-left: 2px solid #5c6464; }
.toolbar .combo { align-self: flex-start; margin: 3px 2px 0 0; }
.combo select { appearance: none; flex: 1; min-width: 0; height: 100%; padding: 0 18px 0 2px; border: 0; background: none; outline: 0; font-size: 12px; }
.combo::after { content: ""; position: absolute; right: 0; top: 0; bottom: 0; width: 16px; background: linear-gradient(#000, #000) center 7px / 7px 1px no-repeat, linear-gradient(#000, #000) center 8px / 5px 1px no-repeat, linear-gradient(#000, #000) center 9px / 3px 1px no-repeat, linear-gradient(#000, #000) center 10px / 1px 1px no-repeat, #e8e6d6; border: 1px solid #fff; border-right-color: #777; border-bottom-color: #777; pointer-events: none; }
.w-filter { width: 69px; }
.w-sets { width: 118px; }
.w-view { width: 78px; }
.w-layer { width: 206px; }
.toolbar .w-layer { height: 23px; }
.state { width: 52px; height: 16px; flex: none; }
.layer-color { flex: none; width: 10px; height: 10px; margin-left: 2px; background: #5a5ae6; border: 1px solid #222; }
.line-style { flex: 1; width: 55px; height: 23px; align-self: flex-start; margin-top: 3px; border: 2px solid #5c6464; border-width: 2px 0 0 2px; background: #dedede; }
.line-style hr { margin: 8px 0 0 3px; border: 0; border-top: 1px dashed #111; }
.field { min-width: 0; height: 20px; padding: 0 2px; border: 1px solid #eee; border-top: 2px solid #444; border-left: 2px solid #444; background: #dedede; outline: 0; }
.field:disabled { color: #777; }
.spin { flex: none; width: 12px; height: 16px; border: 1px solid #eee; border-right-color: #6e6e6e; border-bottom-color: #6e6e6e; background: linear-gradient(#000, #000) center 3px / 1px 1px no-repeat, linear-gradient(#000, #000) center 4px / 3px 1px no-repeat, linear-gradient(#000, #000) center 5px / 5px 1px no-repeat, linear-gradient(#000, #000) center 9px / 5px 1px no-repeat, linear-gradient(#000, #000) center 10px / 3px 1px no-repeat, linear-gradient(#000, #000) center 11px / 1px 1px no-repeat; }
.btn { display: grid; place-items: center; height: 19px; border: 1px solid #eee; border-right-color: #6e6e6e; border-bottom-color: #6e6e6e; background: #c4c4c4; white-space: nowrap; }
.btn:disabled { color: #777; text-shadow: 1px 1px #e8e8e8; }
.mini { flex: none; width: 18px; height: 18px; }
.mini svg { width: 18px; height: 18px; }

/* work area */
.body { flex: 1; min-height: 0; display: flex; }
.work { flex: 1; min-width: 0; display: flex; flex-direction: column; }
.stage { flex: 1; min-height: 0; display: flex; }
.side { flex: none; align-self: flex-start; width: 39px; margin-right: 1px; padding: 2px 4px 5px 5px; border: 1px solid #6e6e6e; border-top-color: #e4e4e4; border-left-color: #e4e4e4; display: flex; flex-direction: column; }
.side::before { content: ""; height: 2px; background: #888; border-bottom: 1px solid #eee; }
.side-tool { height: 39px; display: grid; place-items: center; border-bottom: 1px solid #777; }
.side-tool:last-child { border: 0; }
.side-tool svg { width: 24px; height: 26px; }
.viewport { flex: 1; min-width: 0; border: 2px solid #ff0; background: #7b7b7b; overflow: hidden; }
.scene { width: 100%; height: 100%; }
.minor { stroke: #6d6d6d; }
.major { stroke: #565656; }
.axis { stroke: #000; }
.mesh { stroke: #fff; fill: none; }
.vert { fill: #5353ee; }
.vert.hot { fill: #c80000; }
.pen { fill: none; stroke: #ee2236; stroke-width: 4px; stroke-linecap: round; stroke-linejoin: round; }
.note { fill: #ee2236; font: bold 13px "Liberation Sans", sans-serif; }
.view-name { fill: #c8c8c8; font: 10px "Liberation Mono", monospace; }
.tripod { fill: none; font: 10px "Liberation Mono", monospace; }

.time-slider { flex: none; display: flex; gap: 1px; height: 18px; margin-left: 40px; }
.step { width: 16px; border: 1px solid #eee; border-right-color: #777; border-bottom-color: #777; }
.thumb { width: 124px; border: 1px solid #fff; border-right: 2px solid #000; border-bottom: 2px solid #000; font-size: 12px; }
.trackbar { flex: none; display: flex; height: 27px; margin-left: 40px; padding-right: 45px; border-top: 1px solid #777; border-bottom: 1px solid #eee; }
.curve { width: 49px; display: grid; place-items: center; padding-right: 6px; }
.curve svg { width: 18px; height: 18px; }
.ticks { flex: 1; min-width: 0; height: 26px; overflow: visible; }
.ticks line { stroke: #66727a; }
.ticks .now { fill: #82a8c2; stroke: #587c98; }

/* command panel */
.panel { flex: none; width: 184px; display: flex; flex-direction: column; padding: 1px 5px 0 4px; border-bottom: 1px solid #6e6e6e; }
.tabs { display: flex; gap: 2px; padding-top: 2px; border-bottom: 1px solid #e8e8e8; }
.tab { width: 27px; height: 24px; border: solid #eee; border-width: 1px 1px 0 0; border-right-color: #777; display: grid; place-items: center; }
.tab.active { border-left: 1px solid #eee; }
.tab svg { width: 24px; height: 23px; }
.name-row { display: flex; gap: 3px; margin: 5px 5px 6px 4px; }
.name-row .field { flex: 1; font-size: 12px; }
.swatch { width: 17px; height: 20px; background: #6c0888; border: 1px solid #999; }
.w-full { height: 22px; margin: 0 0 5px 4px; }
.stack { margin: 0 6px 0 5px; height: 152px; border: 2px solid #777568; border-right-color: #fff; border-bottom-color: #fff; background: #dedede; font-size: 12px; }
.stack ul { list-style: none; border-bottom: 1px solid #888; }
.stack-row { position: relative; display: flex; align-items: center; height: 16px; padding: 0 2px 0 32px; }
.stack-row span { flex: 1; }
.stack .root { padding-left: 7px; gap: 6px; }
.stack li::before { content: ""; position: absolute; left: 11px; top: 0; width: 17px; height: 8px; border: dotted #222; border-width: 0 0 1px 1px; }
.stack li:not(:last-child)::after { content: ""; position: absolute; left: 11px; top: 8px; height: 8px; border-left: 1px dotted #222; }
.picked { background: #ffe800; }
.expander { width: 9px; height: 9px; border: 1px solid #222; background: linear-gradient(#000, #000) center / 5px 1px no-repeat; }
.pts { width: 16px; height: 16px; }
.stack-tools { display: flex; align-items: center; gap: 7px; height: 32px; padding-left: 11px; }
.rule { width: 100%; height: 3px; margin: 7px 0; border: solid #000; border-width: 0 0 2px; border-top: 1px solid #777; flex: none; }
.rollouts { flex: 1; min-height: 0; display: flex; margin-bottom: 5px; border: 1px solid #777; border-right: 0; border-bottom-color: #eee; }
.roll-list { flex: 1; overflow: hidden; padding: 4px 2px 0; }
.roll-scroll { width: 4px; background: #000; }
.roll-scroll i { display: block; height: 47px; background: #777; }
.rollout { margin-bottom: 7px; }
.rollout.closed { margin-bottom: 3px; }
.roll-head { position: relative; display: grid; grid-template-columns: 16px 1fr 16px; align-items: center; width: calc(100% - 8px); height: 17px; margin: 0 4px; background: #b2b2b2; border: 1px solid #000; font-size: 12px; }
.roll-body { margin-top: -9px; padding: 10px 7px 4px; border: 1px solid #777; border-bottom-color: #e8e8e8; display: flex; flex-direction: column; gap: 4px; }
.levels { display: flex; gap: 1px; padding-left: 12px; height: 22px; margin-bottom: 1px; }
.level { width: 23px; height: 22px; }
.level svg { width: 22px; height: 22px; }
.level.on { background: #ff0; outline: 1px solid #888; }
.check { display: flex; align-items: center; gap: 5px; height: 16px; padding-left: 4px; white-space: nowrap; }
.check.off { color: #777; text-shadow: 1px 1px #e8e8e8; }
.check input { appearance: none; flex: none; width: 12px; height: 12px; border: 2px solid #777; border-right: 1px solid #eee; border-bottom: 1px solid #eee; background: #dedede; }
.check.off input { background: #c4c4c4; }
.angle { display: flex; align-items: center; gap: 2px; height: 18px; margin-bottom: 3px; }
.angle .field { flex: 1; height: 16px; }
.pair { display: grid; grid-template-columns: 1fr 1fr; gap: 5px; }
.pair .btn { font-size: 12px; width: 100%; height: 18px; line-height: 14px; }
.with-spin, .with-box { display: flex; align-items: center; gap: 2px; min-width: 0; }
.with-box { gap: 0; }
.with-box .box { width: 16px; flex: none; }
.box i { width: 10px; height: 9px; border: 1px solid #000; border-top-width: 3px; }
.count { padding: 1px 4px 0 0; text-align: right; font-size: 12px; }
.edit-body { padding-top: 14px; }

/* status bar */
.status { flex: none; display: flex; height: 46px; overflow: hidden; }
.listener { flex: none; display: flex; flex-direction: column; gap: 2px; width: 102px; padding: 2px 3px 0 1px; border-right: 1px solid #777; }
.listener div { flex: 1; border: 2px solid #777; border-right: 1px solid #eee; border-bottom: 1px solid #eee; }
.macro { background: #d9bfc1; }
.output { background: #fff; }
.info { flex: 1; min-width: 0; display: flex; flex-direction: column; gap: 4px; margin-left: 2px; padding: 3px 2px 0 3px; border-left: 1px solid #777; }
.info-row { display: flex; align-items: center; gap: 3px; height: 21px; flex: none; }
.cell { height: 21px; padding: 4px 0 0 5px; border: 1px solid #777; border-right-color: #eee; border-bottom-color: #eee; overflow: hidden; white-space: nowrap; }
.sel-info { width: 73px; margin-right: 1px; }
.info-row .mini + .mini { margin-left: 6px; }
.grid-info { flex: none; width: 99px; }
.prompt { flex: 1; }
.faded { opacity: .5; }
.coord { display: flex; align-items: center; gap: 1px; flex: 1; min-width: 0; margin-left: 2px; }
.coord .field { flex: 1; width: 20px; }
.btn.key { flex: none; width: 43px; height: auto; margin: 3px 2px 0 1px; }
.key svg { width: 26px; height: 14px; }
.keys { flex: none; width: 49px; padding-top: 3px; }
.keys .btn { width: 100%; height: 22px; }
.filters { flex: none; width: 115px; margin-left: 3px; padding-top: 2px; display: flex; flex-direction: column; gap: 3px; }
.filter-row { display: flex; gap: 7px; }
.filter-row .btn { flex: 1; height: 22px; }
.play { flex: none; width: 122px; margin-left: 6px; padding-top: 4px; display: flex; flex-direction: column; gap: 4px; }
.play-row { display: flex; align-items: center; gap: 4px; height: 20px; }
.play-row .sep { margin: 0; }
.play-row .frame { width: 60px; font-size: 12px; }
.navs { flex: none; display: grid; grid-template-columns: repeat(4, 18px); gap: 5px 6px; align-content: start; padding: 4px 0 0 3px; border-left: 1px solid #888; margin-right: 6px; }

/* notification */
.balloon { position: absolute; left: 267px; bottom: 33px; width: 299px; height: 70px; padding: 7px 7px 0 15px; background: #f2e8c8; border: 1px solid #000; border-radius: 11px; }
.balloon header { display: flex; align-items: center; height: 17px; margin-left: -6px; margin-bottom: 5px; }
.dish { width: 16px; height: 16px; }
.balloon h2 { flex: 1; margin-left: 4px; font: bold 12px/16px "Liberation Sans", Arial, sans-serif; }
.close { width: 17px; height: 17px; border: 1px solid #333; }
.close svg { width: 10px; height: 10px; }
.balloon p { margin-bottom: 3px; }
.balloon a { color: #00f; }
.tail { position: absolute; left: 176px; top: 68px; width: 22px; height: 26px; }
.tail-fill { fill: #f2e8c8; }
```

FILE: app.js
```js
const NS = "http://www.w3.org/2000/svg";
const byId = (id) => document.getElementById(id);

function add(parent, tag, attrs, text) {
  const el = document.createElementNS(NS, tag);
  for (const key in attrs) el.setAttribute(key, attrs[key]);
  if (text !== undefined) el.textContent = text;
  parent.appendChild(el);
}

// Construction grid, ten minor cells to each major one
const step = 7.46;
let minor = "", major = "";
for (let i = -57; i <= 49; i++) {
  const line = `M${Math.round(468 + i * step) + 0.5} 80V595`;
  if (i % 10) minor += line; else major += line;
}
for (let i = -35; i <= 33; i++) {
  const line = `M42 ${Math.round(342 + i * step) + 0.5}H838`;
  if (i % 10) minor += line; else major += line;
}
byId("grid-minor").setAttribute("d", minor);
byId("grid-major").setAttribute("d", major);

// Pool mesh
const rows = [221, 248, 274, 301, 328, 354, 381, 408, 435, 461];
let mesh = "M323.5 122.5H615.5V560.5H323.5zM385.5 184.5H553.5V498.5H385.5zM396.5 194.5H543.5V488.5H396.5z";
for (const y of rows) mesh += `M323.5 ${y}.5H615.5`;
byId("mesh").setAttribute("d", mesh);

const points = [[323, 122], [615, 122], [323, 560], [615, 560], [386, 184], [553, 184], [386, 498], [553, 498], [396, 195], [543, 195], [396, 488], [543, 488]];
for (const y of rows) for (const x of [323, 386, 396, 543, 553, 615]) points.push([x, y]);
for (const [x, y] of points) {
  const hot = (x === 386 || x === 396) && (y === 221 || y === 248);
  add(byId("verts"), "rect", { x: x - 2, y: y - 2, width: 4, height: 4, class: hot ? "vert hot" : "vert" });
}

// Track bar
const ticks = byId("ticks");
add(ticks, "rect", { x: 0, y: 0, width: 8, height: 25, class: "now" });
for (let i = 0; i <= 100; i++) {
  const x = (0.6 + i * 0.983).toFixed(2) + "%";
  add(ticks, "line", { x1: x, x2: x, y1: 0, y2: i % 10 ? 11 : 14, "shape-rendering": "crispEdges" });
  if (i % 10 === 0) add(ticks, "text", { x, y: 22, "text-anchor": "middle" }, i);
}
```
